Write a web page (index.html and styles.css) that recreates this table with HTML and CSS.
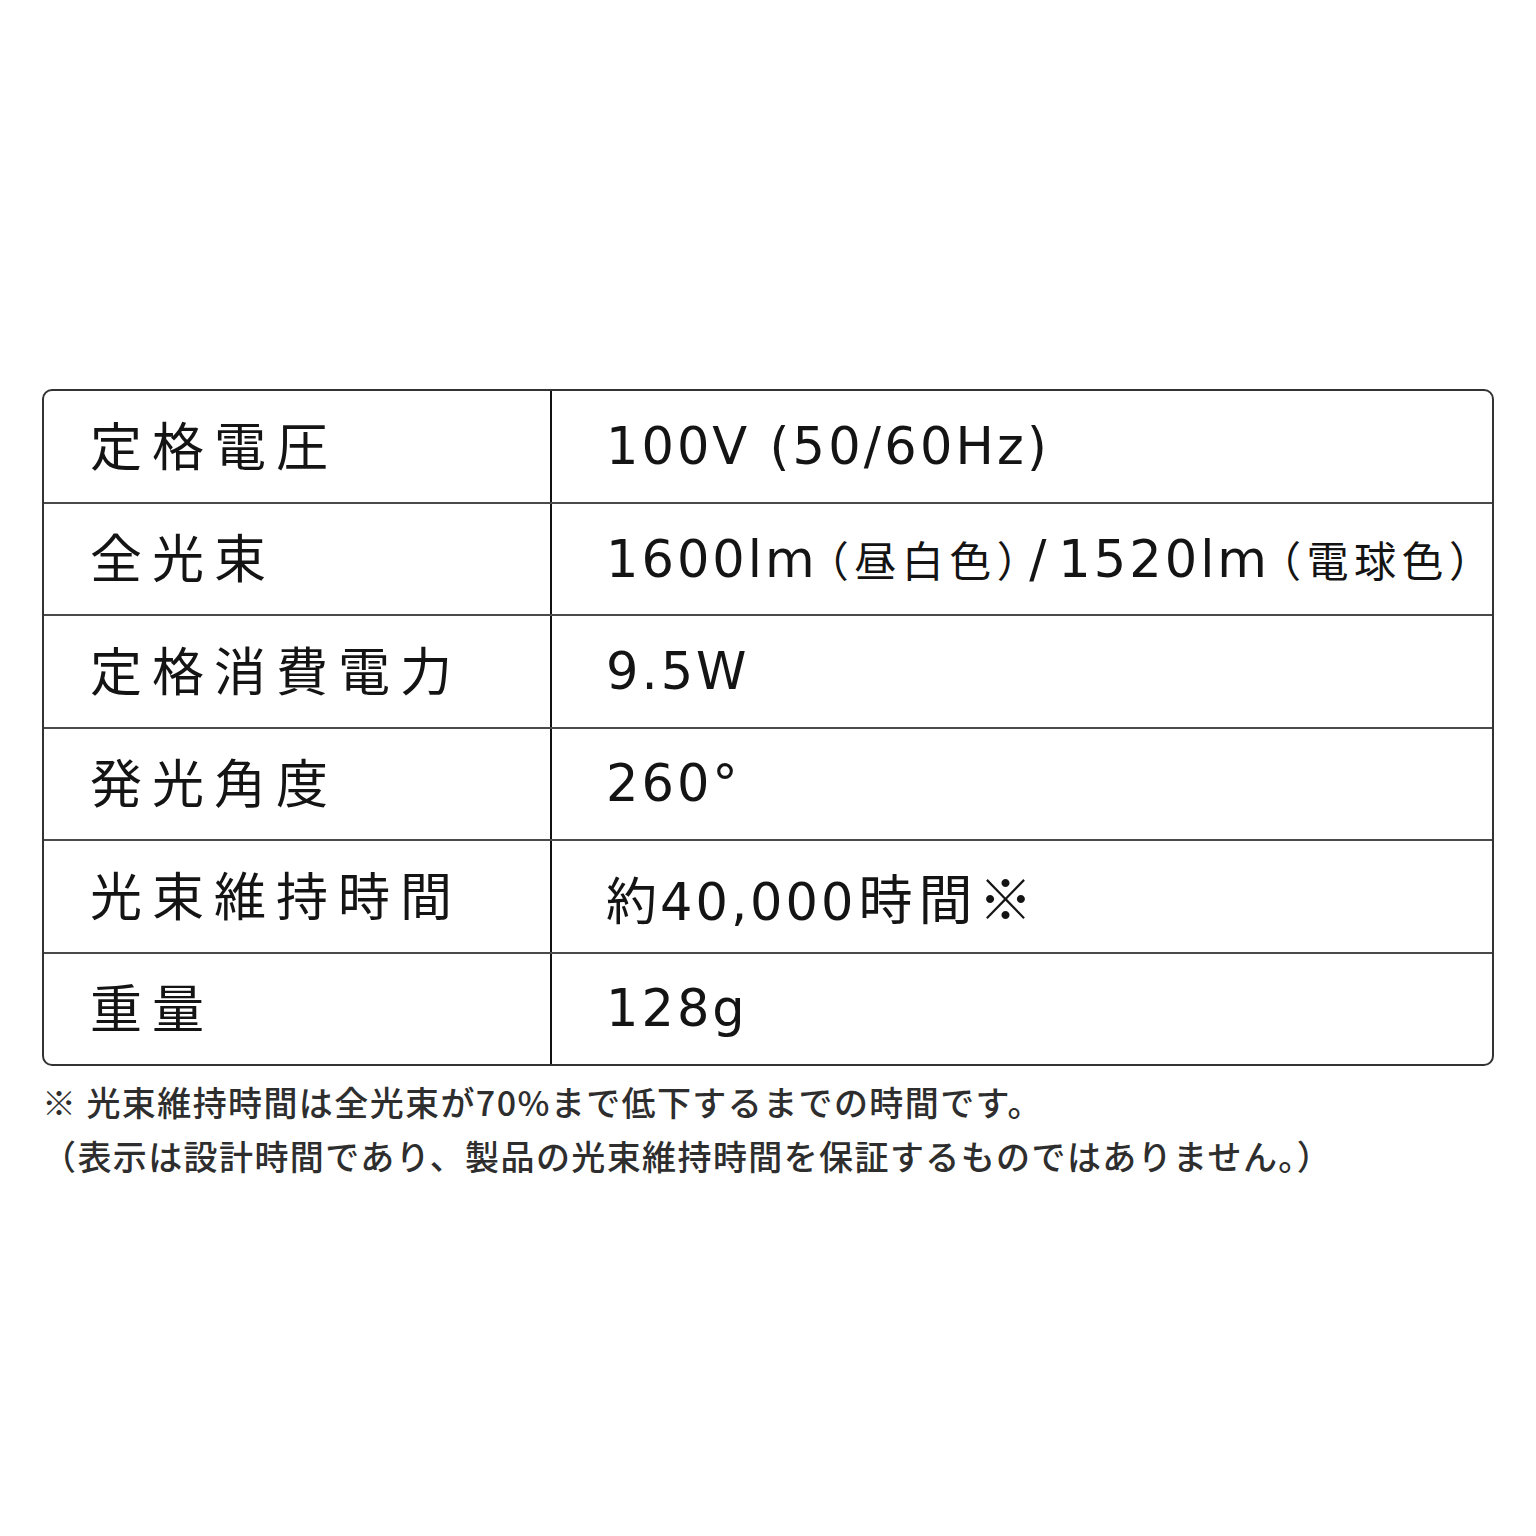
FILE: index.html
```html
<!DOCTYPE html>
<html lang="ja">
<head>
<meta charset="utf-8">
<title>仕様</title>
<link rel="stylesheet" href="styles.css">
</head>
<body>
<main class="page">
  <section class="spec">
    <div class="row">
      <div class="label">定格電圧</div>
      <div class="value"><span class="text">100V <span class="wide">(50/60Hz)</span></span></div>
    </div>
    <div class="row">
      <div class="label">全光束</div>
      <div class="value"><span class="text">1600lm<span class="sub">（昼白色）</span><span class="slash">/</span>1520lm<span class="sub">（電球色）</span></span></div>
    </div>
    <div class="row">
      <div class="label">定格消費電力</div>
      <div class="value"><span class="text">9.5W</span></div>
    </div>
    <div class="row">
      <div class="label">発光角度</div>
      <div class="value"><span class="text">260°</span></div>
    </div>
    <div class="row">
      <div class="label">光束維持時間</div>
      <div class="value"><span class="text">約40,000<span class="jp">時間※</span></span></div>
    </div>
    <div class="row">
      <div class="label">重量</div>
      <div class="value"><span class="text">128g</span></div>
    </div>
  </section>
  <div class="note">
    <p class="note-line">※ 光束維持時間は全光束が70%まで低下するまでの時間です。</p>
    <p class="note-line">（表示は設計時間であり、製品の光束維持時間を保証するものではありません。）</p>
  </div>
</main>
</body>
</html>
```

FILE: styles.css
```css
html, body {
  margin: 0;
  padding: 0;
  background: #ffffff;
}

.page {
  padding: 389px 42px 0 42px;
}

.spec {
  border: 2px solid #333333;
  border-radius: 10px;
  display: flex;
  flex-direction: column;
}

.row {
  display: grid;
  grid-template-columns: 508px 1fr;
  height: 110.5px;
  border-top: 2px solid #4a4a4a;
}

.row:first-child {
  border-top: none;
}

.label {
  display: flex;
  align-items: center;
  padding-left: 46px;
  padding-bottom: 6px;
  border-right: 2px solid #111111;
  font-family: "Noto Sans CJK JP", sans-serif;
  font-size: 52px;
  letter-spacing: 10px;
  color: #141414;
}

.value {
  display: flex;
  align-items: center;
  padding-left: 54px;
  font-family: "DejaVu Sans", "Noto Sans CJK JP", sans-serif;
  font-size: 51px;
  letter-spacing: 3px;
  color: #141414;
  white-space: nowrap;
}

.wide {
  letter-spacing: 3.2px;
}

.sub {
  font-family: "Noto Sans CJK JP", sans-serif;
  font-feature-settings: "halt";
  font-size: 42px;
  letter-spacing: 5.5px;
  margin-left: 10px;
  margin-right: 6px;
}

.slash {
  letter-spacing: 12px;
}

.jp {
  font-family: "Noto Sans CJK JP", sans-serif;
  font-size: 54px;
  letter-spacing: 6px;
  margin-left: 2px;
}

.note {
  margin-top: 9px;
  font-family: "Noto Sans CJK JP", sans-serif;
  font-weight: 500;
  font-size: 34px;
  line-height: 54px;
  color: #2e2e2e;
  letter-spacing: 1.4px;
}

.note-line {
  margin: 0;
}
```
